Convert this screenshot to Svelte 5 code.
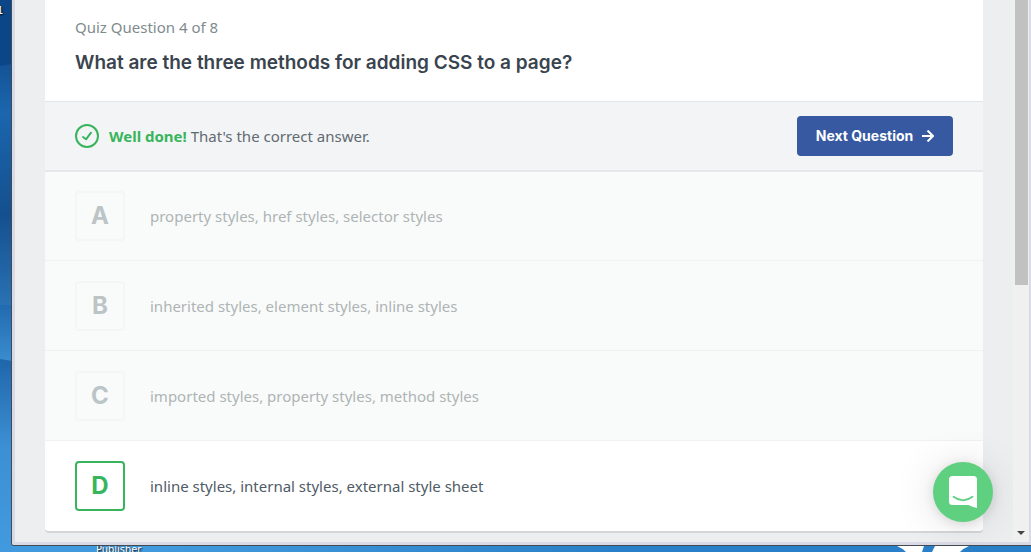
<script>
  const answers = [
    { letter: 'A', text: 'property styles, href styles, selector styles', correct: false },
    { letter: 'B', text: 'inherited styles, element styles, inline styles', correct: false },
    { letter: 'C', text: 'imported styles, property styles, method styles', correct: false },
    { letter: 'D', text: 'inline styles, internal styles, external style sheet', correct: true }
  ];
</script>

<div class="desktop">
  <svg class="wallpaper" viewBox="0 0 12 552" preserveAspectRatio="none" aria-hidden="true">
    <defs>
      <linearGradient id="mid" x1="0" y1="0" x2="0" y2="1">
        <stop offset="0" stop-color="#145296" />
        <stop offset="0.2" stop-color="#1b66ae" />
        <stop offset="0.62" stop-color="#14508f" />
        <stop offset="1" stop-color="#2a72b4" />
      </linearGradient>
      <linearGradient id="band" x1="0" y1="0" x2="0" y2="1">
        <stop offset="0" stop-color="#216bb0" />
        <stop offset="1" stop-color="#3b8dd0" />
      </linearGradient>
      <linearGradient id="low" x1="0" y1="0" x2="0" y2="1">
        <stop offset="0" stop-color="#1f66ab" />
        <stop offset="0.45" stop-color="#3c8fd3" />
        <stop offset="1" stop-color="#429ade" />
      </linearGradient>
    </defs>
    <rect width="12" height="67" fill="#0b4788" />
    <path d="M0 66 L12 64 V306 H0Z" fill="url(#mid)" />
    <path d="M0 305 H12 V362 H0Z" fill="url(#band)" />
    <path d="M0 359 L12 361 V552 H0Z" fill="url(#low)" />
  </svg>
  <span class="icon-label side">1</span>

  <div class="window">
    <div class="page">
      <main class="card">
        <header>
          <p class="progress">Quiz Question 4 of 8</p>
          <h1>What are the three methods for adding CSS to a page?</h1>
        </header>

        <section class="feedback">
          <svg class="check" width="24" height="24" viewBox="0 0 24 24" fill="none" stroke="#38b55c" aria-hidden="true">
            <circle cx="12" cy="12" r="11" stroke-width="2" />
            <path d="M8 13 L11 15.3 L16 8.7" stroke-width="2" stroke-linecap="round" stroke-linejoin="round" />
          </svg>
          <p><strong>Well done!</strong> That's the correct answer.</p>
          <button class="next">
            Next Question
            <svg width="12" height="12" viewBox="0 0 12 12" fill="none" stroke="#fff" stroke-width="2" aria-hidden="true">
              <path d="M0 6 H11 M5.500 0.500 L11 6 L5.500 11.500" />
            </svg>
          </button>
        </section>

        <ol>
          {#each answers as answer}
            <li class:correct={answer.correct}>
              <span class="letter">{answer.letter}</span>
              <span>{answer.text}</span>
            </li>
          {/each}
        </ol>
      </main>

      <button class="chat" aria-label="Open chat">
        <svg width="28" height="32" viewBox="0 0 28 32" aria-hidden="true">
          <path d="M3.5 0 H24.5 Q28 0 28 3.5 V32 Q23 31 19.5 29 H3.5 Q0 29 0 25.500 V3.500 Q0 0 3.500 0Z" fill="#fff" />
          <path d="M4.500 20.800 Q14 27.800 23.500 20.800" fill="none" stroke="#5fcf80" stroke-width="1.800" stroke-linecap="round" />
        </svg>
      </button>
    </div>

    <div class="scrollbar" aria-hidden="true">
      <div class="thumb"></div>
      <svg width="8" height="4" viewBox="0 0 8 4"><path d="M0 0 H8 L4 4Z" fill="#444" /></svg>
    </div>
  </div>

  <div class="strip">
    <span class="icon-label">Publisher</span>
    <svg width="76" height="6" viewBox="0 0 76 6" aria-hidden="true">
      <path d="M0 0 H27 L25 6 H9 Q5 2 0 0Z M38 0 H72 Q67 2 63 6 H35Z" fill="#fff" />
    </svg>
  </div>
</div>

<style>
  :global(body) {
    margin: 0;
  }
  .desktop {
    box-sizing: border-box;
    position: relative;
    display: flex;
    flex-direction: column;
    min-height: 100vh;
    overflow: hidden;
    padding-left: 11px;
    background: linear-gradient(90deg, #429ade 0, #429ade 15%, #2a80c8 60%, #2a80c8 100%);
    font-family: "Noto Sans", sans-serif;
  }
  .wallpaper {
    position: absolute;
    left: 0;
    top: 0;
    width: 12px;
    height: 100%;
  }
  .icon-label {
    font: 11px/8px "DejaVu Sans Condensed", "DejaVu Sans", sans-serif;
    color: #fff;
    text-shadow: 1px 1px 2px #000;
  }
  .side {
    position: absolute;
    left: -3px;
    top: 7px;
  }
  .window {
    position: relative;
    box-sizing: border-box;
    flex: 1;
    display: flex;
    border: solid #d8dae4;
    border-width: 0 2px 3px 3px;
    border-radius: 0 0 0 2px;
    margin-left: 1px;
    box-shadow: 0 0 0 1px #454a52;
    background: #edeef0;
  }
  .page {
    position: relative;
    flex: 1;
    min-width: 0;
    padding: 0 30px 11px;
  }
  .card {
    overflow: hidden;
    border-radius: 0 0 4px 4px;
    background: #fff;
    box-shadow: 0 2px 0 #d5d6d8;
  }
  header {
    padding: 15px 30px 24px;
    border-bottom: 1px solid #e3e5e8;
  }
  p,
  h1,
  ol {
    margin: 0;
    padding: 0;
  }
  .progress {
    font-size: 15px;
    line-height: 24px;
    color: #7f8c8d;
  }
  h1 {
    padding-top: 10px;
    font-family: Inter, sans-serif;
    font-size: 19px;
    line-height: 28px;
    font-weight: 600;
    color: #3a444e;
  }
  .feedback {
    display: flex;
    align-items: center;
    gap: 10px;
    padding: 14px 30px;
    border-bottom: 2px solid #e6e8e9;
    background: #f3f4f6;
    font-size: 15px;
    line-height: 20px;
    color: #616a70;
  }
  .feedback p {
    flex: 1;
  }
  strong {
    font-weight: 700;
    color: #38b55c;
  }
  .next {
    display: flex;
    align-items: center;
    justify-content: center;
    gap: 9px;
    width: 156px;
    height: 40px;
    padding: 0;
    border: 0;
    border-radius: 4px;
    background: #3659a2;
    color: #fff;
    font: 700 14px/20px Inter, sans-serif;
  }
  ol {
    list-style: none;
  }
  li {
    display: flex;
    align-items: center;
    gap: 25px;
    padding: 20px 30px 19px;
    border-bottom: 1px solid #f0f2f2;
    background: #f9fbfa;
    font-size: 15px;
    line-height: 20px;
    color: #aeb4b5;
  }
  li:first-child {
    padding-top: 19px;
  }
  .letter {
    box-sizing: border-box;
    display: grid;
    place-items: center;
    width: 50px;
    height: 50px;
    border: 2px solid #f4f6f6;
    border-radius: 4px;
    font-family: Inter, sans-serif;
    font-size: 24px;
    font-weight: 700;
    color: #bbc4c6;
  }
  .correct {
    border-bottom: 0;
    padding-bottom: 20px;
    background: #fff;
    color: #4f5b66;
  }
  .correct .letter {
    border-color: #38b55c;
    color: #38b55c;
  }
  .chat {
    position: absolute;
    right: 20px;
    bottom: 20px;
    display: grid;
    place-items: center;
    width: 60px;
    height: 60px;
    padding: 0;
    border: 0;
    border-radius: 50%;
    background: #5fcf80;
    box-shadow: 0 2px 12px rgba(0, 0, 0, 0.12), 0 2px 44px rgba(0, 0, 0, 0.12);
  }
  .scrollbar {
    position: relative;
    box-sizing: border-box;
    display: flex;
    flex-direction: column;
    align-items: center;
    justify-content: space-between;
    width: 16px;
    padding-bottom: 7px;
    background: #f0f0f0;
  }
  .thumb {
    width: 13px;
    height: 285px;
    background: #c1c1c1;
  }
  .strip {
    flex: none;
    display: flex;
    justify-content: space-between;
    height: 6px;
    margin-top: 1px;
    padding: 0 58px 0 85px;
  }
</style>
